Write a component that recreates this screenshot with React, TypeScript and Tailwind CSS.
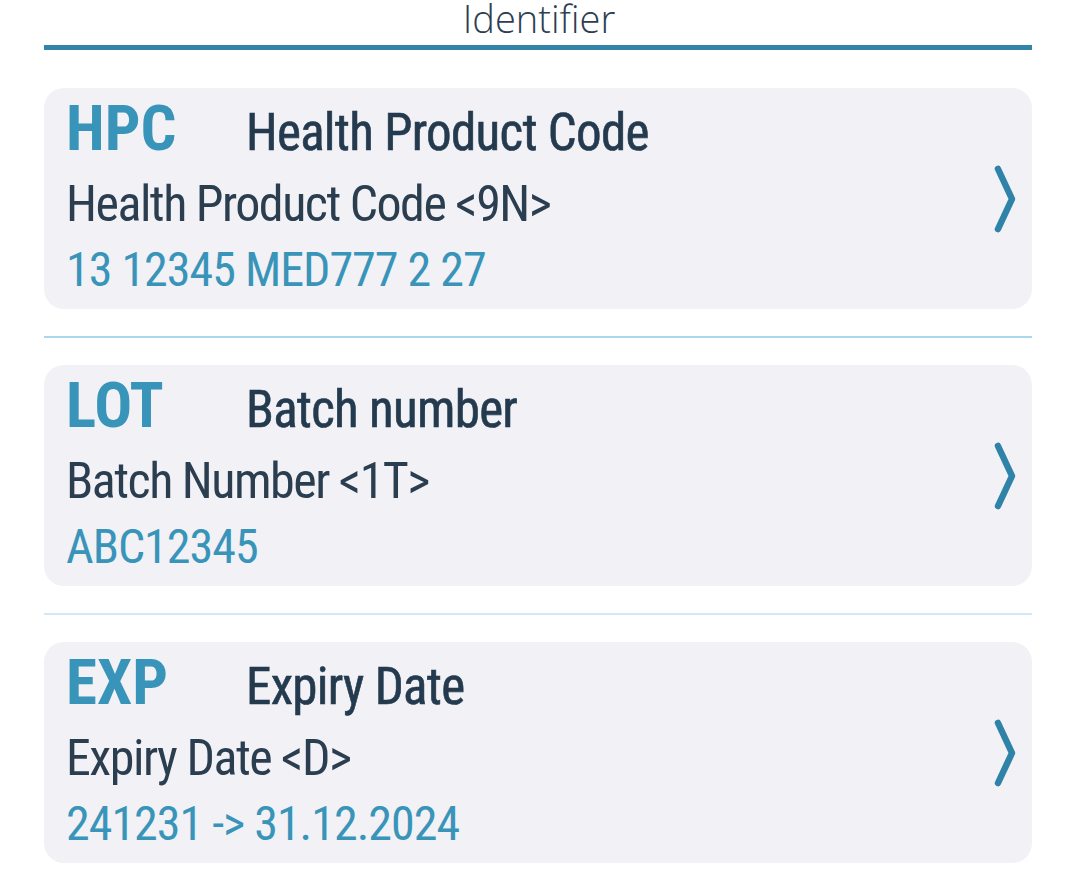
import React from "react";

const items = [
  { code: "HPC", title: "Health Product Code", desc: "Health Product Code <9N>", value: "13 12345 MED777 2 27", sep: "" },
  { code: "LOT", title: "Batch number", desc: "Batch Number <1T>", value: "ABC12345", sep: "bg-[#acd6ee]" },
  { code: "EXP", title: "Expiry Date", desc: "Expiry Date <D>", value: "241231 -> 31.12.2024", sep: "bg-[#d2e8f6]" },
];

function Chevron() {
  return (
    <svg width="30" height="70" viewBox="0 0 30 70" className="shrink-0">
      <path d="M7 5 L21 35 L7 65" fill="none" stroke="#2f83a9" strokeWidth="6.5" strokeLinecap="round" strokeLinejoin="round" />
    </svg>
  );
}

export default function App() {
  return (
    <div className="w-[1078px] h-[888px] bg-white overflow-hidden" style={{ fontFamily: '"Roboto Condensed", "Roboto", sans-serif' }}>
      <div className="h-[45px] pt-[3px] text-center text-[38px] font-extralight text-[#2c3e50] leading-[30px]" style={{ fontFamily: '"Open Sans", "Liberation Sans", sans-serif' }}>
        Identifier
      </div>
      <div className="ml-[44px] mr-[46px] h-[5px] bg-[#3384a9]" />
      <div className="ml-[44px] mr-[46px] pt-[38px]">
        {items.map((it, i) => (
          <div key={it.code}>
            {i > 0 && <div className={`h-[2px] my-[27px] ${it.sep}`} />}
            <div className="h-[221px] rounded-[20px] bg-[#f2f1f6] flex items-center pl-[22px] pr-[11px]">
              <div className="flex-1 flex flex-col pt-[2px]">
                <div className="flex items-baseline h-[73px]">
                  <span className="w-[180px] text-[63px] font-bold text-[#3994b9] leading-none">{it.code}</span>
                  <span className="text-[51px] font-normal text-[#243a4e] leading-none tracking-[-0.7px] [-webkit-text-stroke:0.6px_#243a4e]">{it.title}</span>
                </div>
                <div className="h-[68px] flex items-center text-[50px] text-[#2b3e50] leading-none tracking-[-1.5px]">{it.desc}</div>
                <div className="h-[64px] flex items-center text-[48px] text-[#3994b9] leading-none tracking-[-1px]">{it.value}</div>
              </div>
              <Chevron />
            </div>
          </div>
        ))}
      </div>
    </div>
  );
}
